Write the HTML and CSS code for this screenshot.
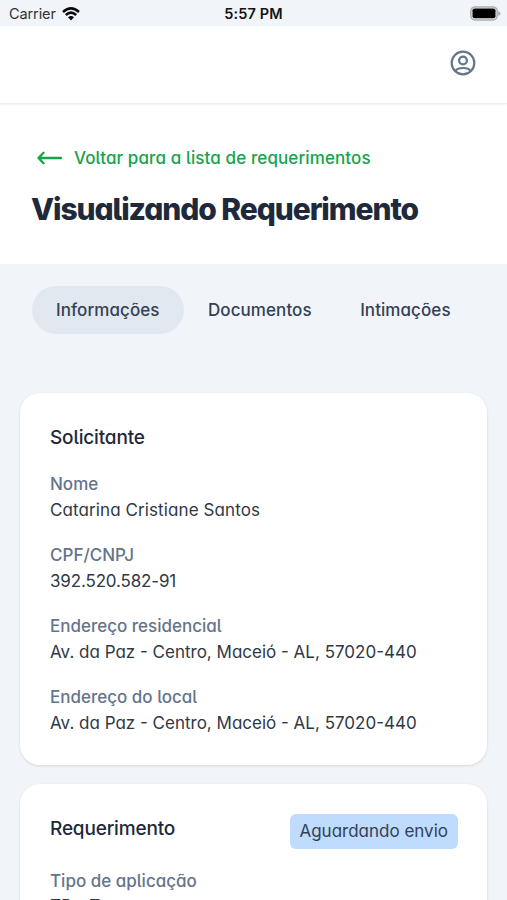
FILE: index.html
```html
<!DOCTYPE html>
<html lang="pt-BR">
<head>
<meta charset="utf-8">
<meta name="viewport" content="width=device-width, initial-scale=1">
<title>Visualizando Requerimento</title>
<link rel="stylesheet" href="styles.css">
</head>
<body>
<div class="statusbar">
  <div class="carrier"><span>Carrier</span>
    <svg width="18" height="14" viewBox="0 0 18 14" fill="none" stroke="#090a0c" stroke-width="2.5"><path d="M1 5Q9 -2.2 17 5M3.8 8Q9 3.2 14.2 8"/><path d="M9 13.4 6 10.2Q9 7.8 12 10.2Z" fill="#090a0c" stroke="none"/></svg>
  </div>
  <time class="clock">5:57 PM</time>
  <svg class="battery" width="31" height="15" viewBox="0 0 31 15"><rect x=".9" y=".9" width="26.2" height="13" rx="4" fill="none" stroke="#aaaead" stroke-width="1.5"/><rect x="2.5" y="2.5" width="23" height="9.8" rx="1.8" fill="#000"/><path d="M28.2 5v5q2.3-1 2.3-2.5t-2.3-2.5Z" fill="#aaaead"/></svg>
</div>
<header class="topbar">
  <svg width="26" height="26" viewBox="0 0 26 26" fill="none" stroke="#64748b" stroke-width="2.2"><circle cx="13" cy="13" r="11.3"/><circle cx="13" cy="10.5" r="3.9"/><path d="M5.5 20.8Q7.5 18 13 18t7.5 2.8"/></svg>
</header>
<section class="heading">
  <a class="back"><svg width="26" height="14" viewBox="0 0 26 14" fill="none" stroke="#16a34a" stroke-width="2.3" stroke-linecap="round" stroke-linejoin="round"><path d="M24 7H1.5M6.5 1.8 1.5 7l5 5.2"/></svg><span>Voltar para a lista de requerimentos</span></a>
  <h1>Visualizando Requerimento</h1>
</section>
<main>
  <nav class="tabs"><a class="tab active">Informações</a><a class="tab">Documentos</a><a class="tab">Intimações</a></nav>
  <section class="card">
    <div class="card-head"><h2>Solicitante</h2></div>
    <dl>
      <div><dt>Nome</dt><dd class="name">Catarina Cristiane Santos</dd></div>
      <div><dt>CPF/CNPJ</dt><dd class="number">392.520.582-91</dd></div>
      <div><dt>Endereço residencial</dt><dd>Av. da Paz - Centro, Maceió - AL, 57020-440</dd></div>
      <div><dt>Endereço do local</dt><dd>Av. da Paz - Centro, Maceió - AL, 57020-440</dd></div>
    </dl>
  </section>
  <section class="card request">
    <div class="card-head"><h2>Requerimento</h2><span class="badge">Aguardando envio</span></div>
    <dl><div><dt>Tipo de aplicação</dt><dd>TR - T</dd></div></dl>
  </section>
</main>
</body>
</html>
```
FILE: styles.css
```css
* { box-sizing: border-box; }
html, body { height: 900px; overflow: hidden; }
body {
  margin: 0;
  background: #f1f5f9;
  color: #334155;
  font-family: Inter, "Liberation Sans", sans-serif;
  font-size: 17px;
  font-feature-settings: "cv11", "cv05";
}
h1, h2, dl, dd { margin: 0; }
svg { display: block; flex: none; }

.statusbar {
  display: grid;
  grid-template-columns: 1fr auto 1fr;
  align-items: center;
  height: 26px;
  padding: 1px 6px 0 9px;
  font-feature-settings: normal;
}
.carrier { display: flex; align-items: center; gap: 6px; font-size: 14.5px; letter-spacing: -.1px; color: #303236; }
.clock { margin-right: 3px; font-size: 14.5px; letter-spacing: .15px; font-weight: 600; color: #111316; }
.battery { justify-self: end; }

.topbar {
  display: flex;
  align-items: center;
  justify-content: flex-end;
  height: 78px;
  padding: 0 31px 3px 0;
  background: #fff;
  border-bottom: 1px solid #eeeeef;
  box-shadow: 0 1px 2px rgba(0, 0, 0, .06);
  position: relative;
}
.heading { height: 160px; padding: 40px 31px 0; background: #fff; }
.back {
  display: flex;
  align-items: center;
  gap: 11px;
  height: 27px;
  padding-left: 6px;
  color: #16a34a;
  font-weight: 500;
  letter-spacing: .11px;
}
h1 {
  margin-top: 19px;
  font-size: 30px;
  line-height: 38px;
  font-weight: 800;
  letter-spacing: -1.08px;
  color: #1e293b;
  white-space: nowrap;
}

main { padding: 22px 20px 0; }
.tabs { display: flex; gap: .5px; padding-left: 12px; margin-bottom: 59px; }
.tab {
  height: 48px;
  padding: 0 24px;
  border-radius: 24px;
  line-height: 48px;
  font-weight: 500;
  letter-spacing: .07px;
}
.tab.active { background: #e2e8f0; }

.card {
  height: 372px;
  margin-bottom: 19px;
  padding: 30px;
  border-radius: 20px;
  background: #fff;
  box-shadow: 0 1px 3px rgba(0, 0, 0, .12);
}
.card-head { display: flex; justify-content: space-between; height: 30px; margin-bottom: 18px; }
h2 { font-size: 19px; line-height: 30px; font-weight: 500; letter-spacing: -.17px; color: #1e293b; }
dl { display: grid; gap: 19px; }
dt, dd { line-height: 26px; white-space: nowrap; }
dd { color: #303846; }
dt { color: #64748b; font-weight: 500; }
.name { letter-spacing: .1px; }
.number { letter-spacing: -.15px; }

.request .card-head { height: 36px; margin-bottom: 18px; }
.request dd { margin-top: -1px; }
.badge {
  height: 35px;
  margin: 0 -1px 0 0;
  padding: 0 10px 0 9.5px;
  border-radius: 6px;
  background: #bfdbfe;
  line-height: 35px;
}
```
